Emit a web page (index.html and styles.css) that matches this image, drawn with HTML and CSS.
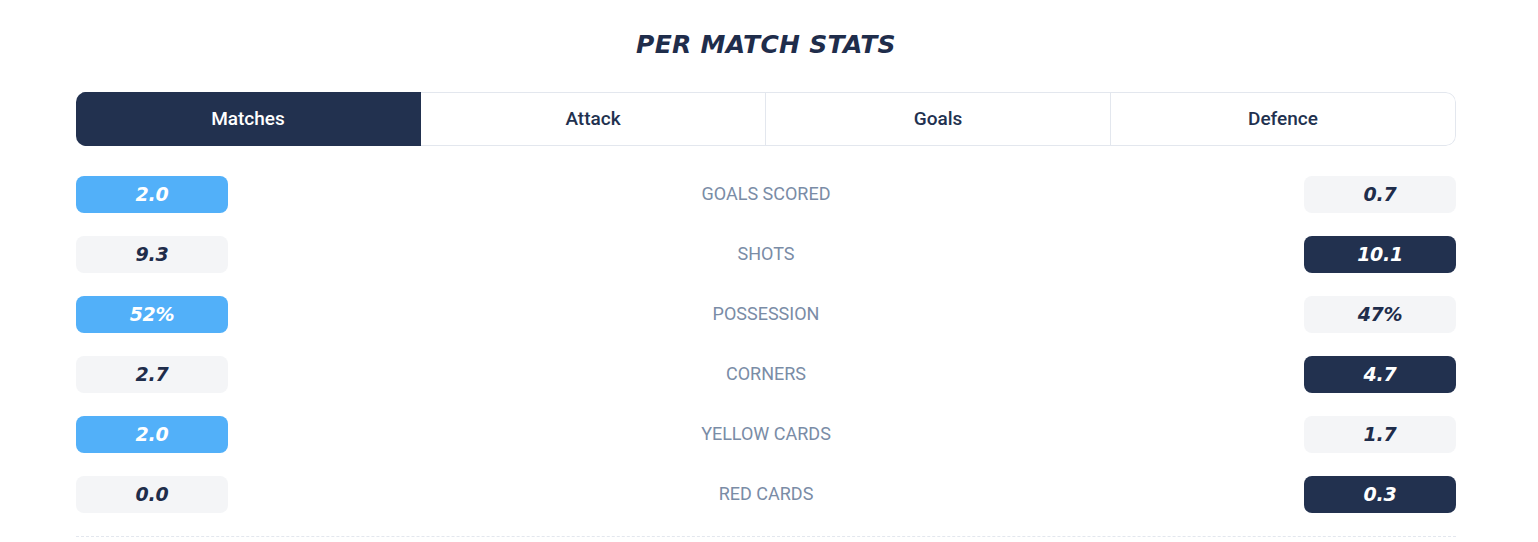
FILE: index.html
```html
<!DOCTYPE html>
<html lang="en">
<head>
<meta charset="utf-8">
<title>Per Match Stats</title>
<link rel="stylesheet" href="styles.css">
</head>
<body>
<section class="stats">
  <h2 class="title">PER MATCH STATS</h2>
  <div class="tabs">
    <div class="tab active">Matches</div>
    <div class="tab">Attack</div>
    <div class="tab">Goals</div>
    <div class="tab">Defence</div>
  </div>
  <div class="rows">
    <div class="row">
      <div class="val blue">2.0</div>
      <div class="label">GOALS SCORED</div>
      <div class="val grey">0.7</div>
    </div>
    <div class="row">
      <div class="val grey">9.3</div>
      <div class="label">SHOTS</div>
      <div class="val navy">10.1</div>
    </div>
    <div class="row">
      <div class="val blue">52%</div>
      <div class="label">POSSESSION</div>
      <div class="val grey">47%</div>
    </div>
    <div class="row">
      <div class="val grey">2.7</div>
      <div class="label">CORNERS</div>
      <div class="val navy">4.7</div>
    </div>
    <div class="row">
      <div class="val blue">2.0</div>
      <div class="label">YELLOW CARDS</div>
      <div class="val grey">1.7</div>
    </div>
    <div class="row">
      <div class="val grey">0.0</div>
      <div class="label">RED CARDS</div>
      <div class="val navy">0.3</div>
    </div>
  </div>
</section>
</body>
</html>
```

FILE: styles.css
```css
html, body {
  margin: 0;
  padding: 0;
  background: #ffffff;
}

body {
  font-family: Roboto, "Liberation Sans", sans-serif;
  color: #22314f;
}

.stats {
  width: 1380px;
  margin: 0 0 0 76px;
  padding-top: 29px;
}

.title {
  margin: 0;
  text-align: center;
  font-family: "DejaVu Sans", sans-serif;
  font-style: italic;
  font-weight: 700;
  font-size: 25px;
  line-height: 32px;
  letter-spacing: 0.3px;
  color: #1f2d4b;
}

.tabs {
  margin-top: 31px;
  display: grid;
  grid-template-columns: repeat(4, 1fr);
  height: 54px;
  border-radius: 10px;
  overflow: hidden;
}

.tab {
  display: flex;
  align-items: center;
  justify-content: center;
  padding-bottom: 2px;
  box-sizing: border-box;
  font-size: 19px;
  font-weight: 500;
  color: #22314f;
  border: 1px solid #e3e7ee;
  border-left: none;
}

.tab:last-child {
  border-radius: 0 10px 10px 0;
}

.tab.active {
  background: #22314f;
  border-color: #22314f;
  color: #ffffff;
}

.rows {
  margin-top: 30px;
  display: flex;
  flex-direction: column;
  gap: 23px;
  padding-bottom: 23px;
  border-bottom: 1px dashed #e3e7ee;
}

.row {
  display: flex;
  align-items: center;
  justify-content: space-between;
  height: 37px;
}

.val {
  width: 152px;
  height: 37px;
  border-radius: 8px;
  display: flex;
  align-items: center;
  justify-content: center;
  padding-bottom: 1px;
  box-sizing: border-box;
  font-family: "DejaVu Sans", sans-serif;
  font-style: italic;
  font-weight: 700;
  font-size: 19px;
  letter-spacing: -0.3px;
}

.val.blue {
  background: #52b0f9;
  color: #ffffff;
}

.val.grey {
  background: #f4f5f7;
  color: #1f2d4b;
}

.val.navy {
  background: #22314f;
  color: #ffffff;
}

.label {
  font-size: 18px;
  line-height: 22px;
  padding-bottom: 2px;
  color: #7a8ca6;
}
```
